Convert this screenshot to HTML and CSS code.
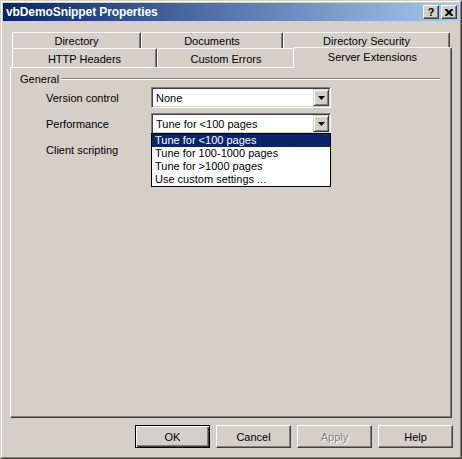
FILE: index.html
```html
<!DOCTYPE html>
<html>
<head>
<meta charset="utf-8">
<title>vbDemoSnippet Properties</title>
<link rel="stylesheet" href="styles.css">
</head>
<body>
<div class="window">
  <div class="frame">
    <div class="titlebar">
      <span class="title">vbDemoSnippet Properties</span>
      <div class="cap-btns">
        <div class="cap-btn help">?</div>
        <div class="cap-btn close">
          <svg width="8" height="7" viewBox="0 0 8 7"><path d="M0 0h2l2 2 2-2h2v1l-2.5 2.5 2.5 2.5v1h-2l-2-2-2 2h-2v-1l2.5-2.5-2.5-2.5z" fill="#000"/></svg>
        </div>
      </div>
    </div>
    <div class="main">
      <div class="tab-row back">
        <div class="tab t-dir">Directory</div>
        <div class="tab t-docs">Documents</div>
        <div class="tab t-sec">Directory Security</div>
      </div>
      <div class="tab-row front">
        <div class="tab t-http">HTTP Headers</div>
        <div class="tab t-err">Custom Errors</div>
        <div class="tab t-ext selected">Server Extensions</div>
      </div>
      <div class="panel">
        <div class="group-head"><span>General</span><div class="etch"></div></div>
        <div class="form">
          <div class="label">Version control</div>
          <div class="combo">
            <div class="combo-text">None</div>
            <div class="combo-btn"><svg width="7" height="4" viewBox="0 0 7 4"><polygon points="0,0 7,0 3.5,4" fill="#000"/></svg></div>
          </div>
          <div class="label">Performance</div>
          <div class="combo">
            <div class="combo-text">Tune for &lt;100 pages</div>
            <div class="combo-btn"><svg width="7" height="4" viewBox="0 0 7 4"><polygon points="0,0 7,0 3.5,4" fill="#000"/></svg></div>
            <div class="dropdown">
              <div class="item active">Tune for &lt;100 pages</div>
              <div class="item">Tune for 100-1000 pages</div>
              <div class="item">Tune for &gt;1000 pages</div>
              <div class="item">Use custom settings ...</div>
            </div>
          </div>
          <div class="label">Client scripting</div>
          <div class="combo-spacer"></div>
        </div>
      </div>
      <div class="buttons">
        <div class="btn default">OK</div>
        <div class="btn">Cancel</div>
        <div class="btn disabled">Apply</div>
        <div class="btn">Help</div>
      </div>
    </div>
  </div>
</div>
</body>
</html>
```

FILE: styles.css
```css
html, body {
  margin: 0;
  padding: 0;
  background: #d4d0c8;
}
body {
  font-family: "Liberation Sans", Arial, sans-serif;
  font-size: 11px;
  color: #000;
}
.window {
  width: 462px;
  height: 459px;
  box-sizing: border-box;
  border: 1px solid;
  border-color: #d4d0c8 #404040 #404040 #d4d0c8;
  background: #d4d0c8;
}
.frame {
  height: 100%;
  box-sizing: border-box;
  border: 1px solid;
  border-color: #fff #808080 #808080 #fff;
  padding: 1px;
  display: flex;
  flex-direction: column;
}
.titlebar {
  flex: none;
  height: 18px;
  display: flex;
  align-items: center;
  padding: 0 2px 0 2px;
  background: linear-gradient(to right, #0a246a, #a6caf0);
}
.title {
  flex: 1;
  color: #fff;
  font-weight: bold;
  font-size: 12px;
  padding-left: 1px;
  letter-spacing: -0.1px;
}
.cap-btns {
  display: flex;
  gap: 2px;
}
.cap-btn {
  width: 16px;
  height: 14px;
  box-sizing: border-box;
  background: #d4d0c8;
  border: 1px solid;
  border-color: #fff #404040 #404040 #fff;
  box-shadow: inset -1px -1px #808080;
  display: flex;
  align-items: center;
  justify-content: center;
  font-weight: bold;
  font-size: 11px;
  line-height: 1;
}
.cap-btn.help {
  padding-top: 1px;
}
.cap-btn svg {
  display: block;
}
.main {
  flex: 1;
  display: flex;
  flex-direction: column;
  padding: 11px 7px 0 7px;
}
.tab-row {
  display: flex;
  align-items: flex-start;
  margin-left: 2px;
}
.tab {
  flex: none;
  box-sizing: border-box;
  background: #d4d0c8;
  border-top: 1px solid #fff;
  border-left: 1px solid #fff;
  border-right: 1px solid #404040;
  box-shadow: inset -1px 0 #808080;
  border-top-left-radius: 2px;
  border-top-right-radius: 2px;
  display: flex;
  align-items: center;
  justify-content: center;
}
.back .tab {
  height: 16px;
  padding-top: 1px;
}
.front .tab {
  height: 19px;
  padding-top: 1px;
}
.t-dir { width: 129px; }
.t-docs { width: 142px; }
.t-sec { width: 167px; }
.t-http { width: 145px; }
.t-err { width: 138px; }
.t-ext { width: 155px; }
.tab.selected {
  width: 159px;
  height: 21px;
  margin: -1px -2px -1px -2px;
  padding-top: 0;
  padding-bottom: 2px;
  position: relative;
  z-index: 1;
}
.panel {
  height: 351px;
  box-sizing: border-box;
  border: 1px solid;
  border-color: #fff #404040 #404040 #fff;
  box-shadow: inset -1px -1px #808080;
  padding: 0 11px 0 0;
}
.group-head {
  display: flex;
  align-items: center;
  margin-top: 4px;
  padding-left: 9px;
  height: 13px;
}
.etch {
  flex: 1;
  height: 0;
  border-top: 1px solid #808080;
  border-bottom: 1px solid #fff;
  margin-left: 2px;
  margin-top: 1px;
}
.form {
  display: grid;
  grid-template-columns: 105px 180px;
  grid-auto-rows: 21px;
  row-gap: 5px;
  padding-left: 35px;
  margin-top: 2px;
}
.label {
  display: flex;
  align-items: center;
}
.combo {
  position: relative;
  box-sizing: border-box;
  height: 21px;
  border: 1px solid;
  border-color: #808080 #fff #fff #808080;
  box-shadow: inset 1px 1px #404040, inset -1px -1px #d4d0c8;
  padding: 1px;
  background: #fff;
  display: flex;
}
.combo-text {
  flex: 1;
  display: flex;
  align-items: center;
  padding-left: 3px;
}
.combo-btn {
  width: 16px;
  height: 17px;
  box-sizing: border-box;
  background: #d4d0c8;
  border: 1px solid;
  border-color: #d4d0c8 #404040 #404040 #d4d0c8;
  box-shadow: inset 1px 1px #fff, inset -1px -1px #808080;
  display: flex;
  align-items: center;
  justify-content: center;
}
.combo-btn svg {
  display: block;
}
.dropdown {
  position: absolute;
  top: 19px;
  left: -1px;
  width: 180px;
  box-sizing: border-box;
  border: 1px solid #000;
  background: #fff;
  z-index: 2;
}
.item {
  height: 13px;
  line-height: 13px;
  padding-left: 3px;
  white-space: nowrap;
}
.item.active {
  background: #0a246a;
  color: #fff;
}
.buttons {
  display: flex;
  justify-content: flex-end;
  gap: 6px;
  margin-top: 7px;
  margin-right: -1px;
}
.btn {
  width: 75px;
  height: 23px;
  box-sizing: border-box;
  border: 1px solid;
  border-color: #fff #404040 #404040 #fff;
  box-shadow: inset -1px -1px #808080;
  display: flex;
  align-items: center;
  justify-content: center;
}
.btn.default {
  border-color: #000;
  box-shadow: inset 1px 1px #fff, inset -1px -1px #404040, inset -2px -2px #808080;
}
.btn.disabled {
  color: #808080;
  text-shadow: 1px 1px #fff;
}
```
